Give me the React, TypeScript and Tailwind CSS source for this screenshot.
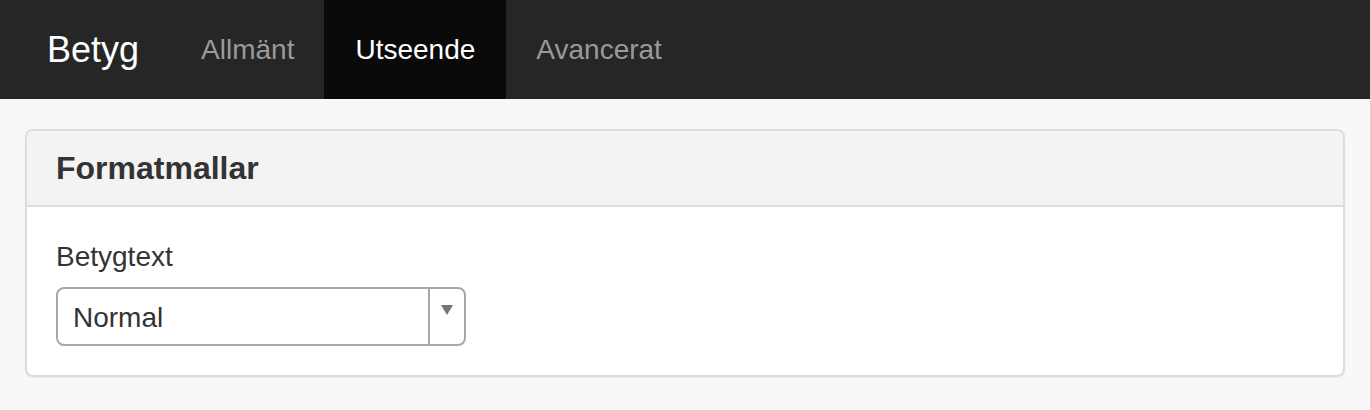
import React from "react";

export default function App() {
  return (
    <div className="w-[1370px] h-[410px] bg-[#f8f8f8] overflow-hidden" style={{ fontFamily: '"Liberation Sans", Arial, sans-serif' }}>
      <nav className="h-[99px] bg-[#262626] flex items-stretch pl-[17px]">
        <div className="pl-[30px] pr-[32px] flex items-center text-[36px] text-white leading-none">Betyg</div>
        <div className="flex items-stretch text-[28px]">
          <div className="px-[30px] flex items-center text-[#9a9a9a]">Allmänt</div>
          <div className="px-[31px] flex items-center text-white bg-[#0a0a0a]">Utseende</div>
          <div className="px-[30px] flex items-center text-[#9a9a9a]">Avancerat</div>
        </div>
      </nav>
      <div className="px-[25px] pt-[30px]">
        <div className="border-2 border-[#dcdcdc] rounded-[8px] bg-white shadow-[0_1px_2px_rgba(0,0,0,0.05)] overflow-hidden">
          <div className="bg-[#f3f3f3] border-b-2 border-[#dcdcdc] h-[76px] px-[29px] flex items-center">
            <h3 className="text-[32px] font-bold text-[#333] leading-none">Formatmallar</h3>
          </div>
          <div className="px-[29px] pt-[30px] pb-[29px]">
            <div className="text-[28px] text-[#333] leading-[40px] mb-[10px]">Betygtext</div>
            <div className="w-[410px] h-[59px] border-2 border-[#a8a8a8] rounded-[8px] flex items-stretch">
              <div className="flex-1 flex items-center pl-[15px] pt-[2px] text-[28px] text-[#333]">Normal</div>
              <div className="w-[36px] border-l-2 border-[#a8a8a8] flex items-start justify-center pt-[16px]">
                <svg width="12" height="10" viewBox="0 0 12 10">
                  <polygon points="0,0 12,0 6,10" fill="#777" />
                </svg>
              </div>
            </div>
          </div>
        </div>
      </div>
    </div>
  );
}
